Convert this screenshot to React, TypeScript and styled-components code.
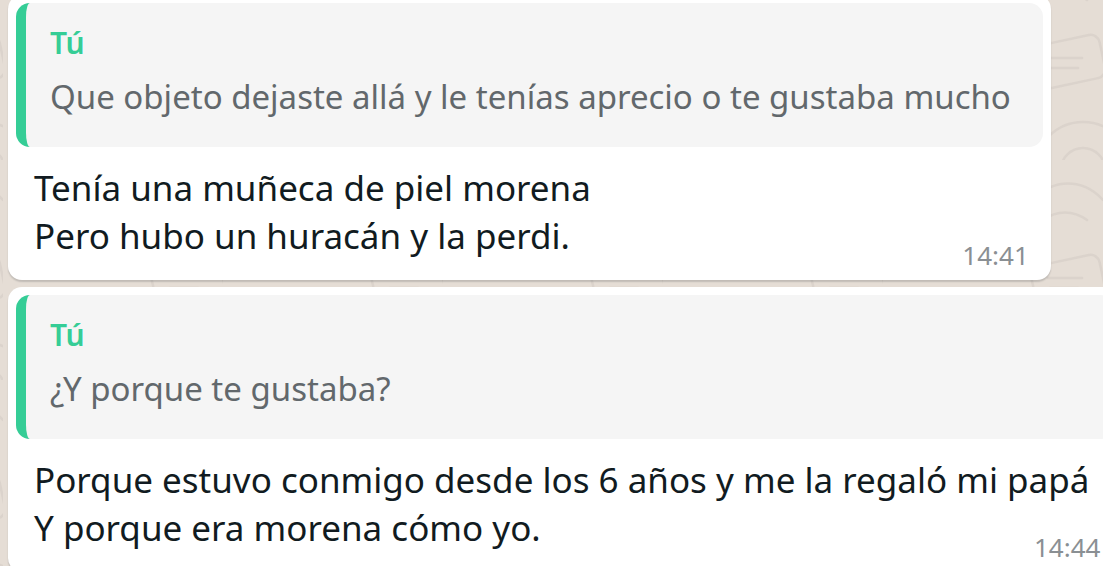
import React from "react";
import styled, { createGlobalStyle } from "styled-components";

const doodles = encodeURIComponent(
  `<svg xmlns="http://www.w3.org/2000/svg" width="220" height="220" viewBox="0 0 220 220"><g fill="none" stroke="#000" stroke-opacity="0.045" stroke-width="2.5" stroke-linecap="round" stroke-linejoin="round"><rect x="150" y="100" width="70" height="44" rx="9" transform="rotate(-12 185 122)"/><path d="M165 118h34M167 128h28"/><circle cx="200" cy="230" r="48"/><circle cx="200" cy="230" r="22"/><path d="M150 40c20-22 50-22 70 0M160 60c14-10 30-10 44 0"/><path d="M10 60c14 10 14 30 0 40M20 150c-10 14-10 30 0 44"/><path d="M60 10c10 10 30 10 40 0M70 200c12-8 28-8 40 0"/></g></svg>`
);

const GlobalStyle = createGlobalStyle`
  html, body {
    margin: 0;
    height: 566px;
    overflow: hidden;
  }
  body {
    background-color: #e5ddd5;
    background-image: url("data:image/svg+xml,${doodles}");
    background-position: 883px -60px;
    font-family: "Noto Sans", "Open Sans", sans-serif;
    -webkit-font-smoothing: antialiased;
  }
`;

const ChatPane = styled.main`
  display: flex;
  flex-direction: column;
  align-items: flex-start;
  gap: 7px;
  padding-left: 8px;
  margin-top: -5px;
`;

const Bubble = styled.div`
  position: relative;
  display: flex;
  flex-direction: column;
  width: max-content;
  padding: 8px;
  background: #ffffff;
  border-radius: 14px;
  box-shadow: 0 2px 1.5px rgba(11, 20, 26, 0.16);
`;

const Quote = styled.div`
  display: flex;
  flex-direction: column;
  padding: 20px 32px 28px 24px;
  background: #f5f5f5;
  border-left: 10px solid #35cd96;
  border-radius: 14px;
`;

const QuoteAuthor = styled.div`
  font-size: 30px;
  line-height: 40px;
  font-weight: 600;
  color: #35cd96;
`;

const QuoteText = styled.div`
  margin-top: 12px;
  font-size: 33px;
  line-height: 44px;
  color: #62686c;
  white-space: nowrap;
`;

const Body = styled.div`
  display: flex;
  flex-direction: column;
  align-items: flex-start;
  padding: 17px 25px 12px 18px;
  font-size: 35px;
  line-height: 48px;
  color: #111b21;
`;

const Line = styled.span`
  white-space: nowrap;
`;

const Time = styled.span`
  position: absolute;
  right: 22px;
  bottom: 10px;
  font-size: 26px;
  line-height: 30px;
  color: #8a8f93;
`;

type Msg = { quote: string; lines: string[]; time: string };

const messages: Msg[] = [
  {
    quote: "Que objeto dejaste allá y le tenías aprecio o te gustaba mucho",
    lines: ["Tenía una muñeca de piel morena", "Pero hubo un huracán y la perdi."],
    time: "14:41",
  },
  {
    quote: "¿Y porque te gustaba?",
    lines: [
      "Porque estuvo conmigo desde los 6 años y me la regaló mi papá",
      "Y porque era morena cómo yo.",
    ],
    time: "14:44",
  },
];

export default function App() {
  return (
    <>
      <GlobalStyle />
      <ChatPane>
        {messages.map((m) => (
          <Bubble key={m.time}>
            <Quote>
              <QuoteAuthor>Tú</QuoteAuthor>
              <QuoteText>{m.quote}</QuoteText>
            </Quote>
            <Body>
              {m.lines.map((l) => (
                <Line key={l}>{l}</Line>
              ))}
            </Body>
            <Time>{m.time}</Time>
          </Bubble>
        ))}
      </ChatPane>
    </>
  );
}
